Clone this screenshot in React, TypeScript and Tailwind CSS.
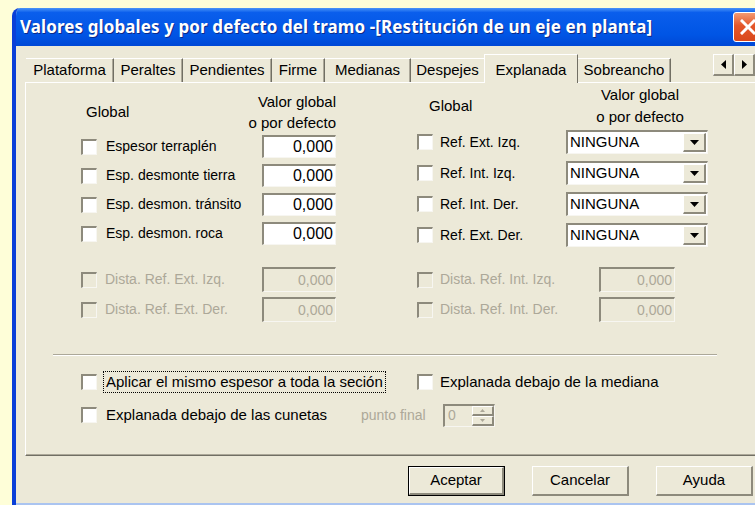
import React from 'react';

// Windows XP style dialog: global / default values of a road section
const sans = "font-['Liberation_Sans',Arial,sans-serif]";

// 3D edges used by the classic controls
const sunken =
  'border-t-2 border-l-2 border-r border-b border-t-[#8d8a7c] border-l-[#8d8a7c] border-r-[#f7f6f1] border-b-[#f7f6f1]';
const raised =
  'border-t border-l border-r-2 border-b-2 border-t-white border-l-white border-r-[#8d8a7c] border-b-[#8d8a7c]';

function Check({ disabled = false }: { disabled?: boolean }) {
  return <span className={`block w-[16px] h-[16px] shrink-0 ${sunken} ${disabled ? 'bg-[#ece9d8]' : 'bg-white'}`} />;
}

function NumberBox({ disabled = false, size }: { disabled?: boolean; size: string }) {
  return (
    <div
      className={`${size} ${sunken} flex items-center justify-end pr-[2px] ${
        disabled ? 'bg-[#ece9d8] text-[#aca899] text-[14px]' : 'bg-white text-black text-[16px]'
      }`}
    >
      0,000
    </div>
  );
}

function Combo() {
  return (
    <div className={`w-[142px] h-[24px] ${sunken} bg-white flex items-start`}>
      <span className="pl-[2px] pt-[1px] text-[15px] leading-[18px]">NINGUNA</span>
      <span className={`ml-auto mt-[1px] mr-[1px] w-[23px] h-[19px] ${raised} bg-[#ece9d8] flex items-center justify-center`}>
        <svg width="9" height="5" viewBox="0 0 9 5">
          <path d="M0 0h9L4.5 5z" fill="#000" />
        </svg>
      </span>
    </div>
  );
}

const tabs = [
  { label: 'Plataforma', w: 'w-[88px]' },
  { label: 'Peraltes', w: 'w-[69px]' },
  { label: 'Pendientes', w: 'w-[89px]' },
  { label: 'Firme', w: 'w-[53px]' },
  { label: 'Medianas', w: 'w-[86px]' },
];

const leftRows = ['Espesor terraplén', 'Esp. desmonte tierra', 'Esp. desmon. tránsito', 'Esp. desmon. roca'];
const rightRows = ['Ref. Ext. Izq.', 'Ref. Int. Izq.', 'Ref. Int. Der.', 'Ref. Ext. Der.'];

function Tab({ label, w, edge = true }: { label: string; w: string; edge?: boolean }) {
  return (
    <div
      className={`${w} h-[24px] flex items-center justify-center border-t border-t-white ${
        edge ? 'border-r border-r-[#716f64] shadow-[inset_-1px_0_0_#aca899]' : ''
      }`}
    >
      {label}
    </div>
  );
}

function ScrollArrow({ dir }: { dir: 'left' | 'right' }) {
  return (
    <span className={`w-[21px] h-[22px] ${raised} bg-[#ece9d8] flex items-center justify-center`}>
      <svg width="5" height="9" viewBox="0 0 5 9">
        <path d={dir === 'left' ? 'M5 0v9L0 4.5z' : 'M0 0v9l5-4.5z'} fill="#000" />
      </svg>
    </span>
  );
}

function Button({ label, primary = false }: { label: string; primary?: boolean }) {
  return (
    <div className={`w-[97px] h-[30px] ${primary ? 'border border-black' : ''}`}>
      <div className={`w-full h-full ${raised} bg-[#ece9d8] flex items-center justify-center text-[15px]`}>{label}</div>
    </div>
  );
}

export default function App() {
  return (
    <div className={`w-[755px] h-[505px] overflow-hidden bg-[#fefed8] pl-[12px] pt-[8px] ${sans} text-black`}>
      <div className="w-[760px] flex flex-col rounded-tl-[8px] overflow-hidden border-l-4 border-l-[#0a3fd8]">
        {/* title bar */}
        <div className="h-[38px] flex items-center pl-[4px] bg-[linear-gradient(to_bottom,#4a94f8,#0a5eec_12%,#0055e5_70%,#0048d6)]">
          <span className="font-['Noto_Sans',sans-serif] font-bold text-[17px] tracking-[0.1px] text-white [text-shadow:1px_1px_0_#0b2a8a]">
            Valores globales y por defecto del tramo -[Restitución de un eje en planta]
          </span>
          <span className="ml-auto mr-[9px] w-[30px] h-[30px] rounded-[3px] border border-white bg-[linear-gradient(to_bottom,#f39a72,#e4572a_45%,#d9481c)] flex items-center justify-center">
            <svg width="16" height="16" viewBox="0 0 16 16">
              <path d="M2 2l12 12M14 2L2 14" stroke="#fff" strokeWidth="3" strokeLinecap="square" />
            </svg>
          </span>
        </div>

        {/* dialog body */}
        <div className="h-[457px] bg-[#ece9d8] pt-[8px] text-[15px] flex flex-col">
          {/* tab strip */}
          <div className="h-[28px] ml-[10px] flex items-end">
            {tabs.map((t) => (
              <Tab key={t.label} label={t.label} w={t.w} />
            ))}
            <Tab label="Despejes" w="w-[73px]" edge={false} />
            <div className="w-[94px] h-[29px] -mb-px relative z-10 bg-[#ece9d8] border-t border-l border-white border-r border-r-[#716f64] flex justify-center pt-[4px]">
              Explanada
            </div>
            <Tab label="Sobreancho" w="w-[93px]" />
            <div className="self-start ml-[42px] flex">
              <ScrollArrow dir="left" />
              <ScrollArrow dir="right" />
            </div>
          </div>

          {/* tab page */}
          <div className="ml-[9px] w-[745px] h-[374px] border-t border-l border-white border-b border-b-[#716f64] shadow-[inset_0_-1px_0_#aca899] flex flex-col">
            {/* enabled values */}
            <div className="flex pl-[55px] items-start">
              <div className="w-[255px] mt-[8px] flex flex-col">
                <div className="h-[42px] flex items-center">
                  <span className="pl-[5px]">Global</span>
                  <span className="ml-auto text-right leading-[21px]">
                    Valor global
                    <br />o por defecto
                  </span>
                </div>
                <div className="mt-[2px] flex flex-col gap-[6px]">
                  {leftRows.map((r) => (
                    <div key={r} className="h-[23px] flex items-center">
                      <Check />
                      <span className="ml-[9px] text-[14px]">{r}</span>
                      <div className="ml-auto">
                        <NumberBox size="w-[74px] h-[23px]" />
                      </div>
                    </div>
                  ))}
                </div>
              </div>

              <div className="w-[297px] ml-[81px] mt-[1px] flex flex-col">
                <div className="h-[44px] flex items-center">
                  <span className="w-[149px] pl-[12px]">Global</span>
                  <span className="w-[148px] text-center leading-[22px]">
                    Valor global
                    <br />o por defecto
                  </span>
                </div>
                <div className="mt-[2px] flex flex-col gap-[7px]">
                  {rightRows.map((r) => (
                    <div key={r} className="h-[24px] flex items-center">
                      <Check />
                      <span className="ml-[7px] text-[14px]">{r}</span>
                      <div className="ml-auto mr-[6px]">
                        <Combo />
                      </div>
                    </div>
                  ))}
                </div>
              </div>
            </div>

            {/* disabled distances */}
            <div className="mt-[20px] flex pl-[55px] text-[14px] text-[#aca899]">
              <div className="w-[255px] flex flex-col gap-[5px]">
                {['Dista. Ref. Ext. Izq.', 'Dista. Ref. Ext. Der.'].map((r) => (
                  <div key={r} className="h-[25px] flex items-center">
                    <Check disabled />
                    <span className="ml-[8px]">{r}</span>
                    <div className="ml-auto">
                      <NumberBox disabled size="w-[74px] h-[25px]" />
                    </div>
                  </div>
                ))}
              </div>
              <div className="w-[258px] ml-[81px] flex flex-col gap-[5px]">
                {['Dista. Ref. Int. Izq.', 'Dista. Ref. Int. Der.'].map((r) => (
                  <div key={r} className="h-[25px] flex items-center">
                    <Check disabled />
                    <span className="ml-[7px]">{r}</span>
                    <div className="ml-auto">
                      <NumberBox disabled size="w-[76px] h-[25px]" />
                    </div>
                  </div>
                ))}
              </div>
            </div>

            <div className="mt-[32px] ml-[27px] w-[664px] border-t border-t-[#aca899] border-b border-b-white" />

            {/* options */}
            <div className="mt-[15px] pl-[55px] h-[22px] flex items-center">
              <div className="w-[336px] flex items-center">
                <Check />
                <span className="ml-[6px] px-[2px] leading-[20px] border border-dotted border-black">
                  Aplicar el mismo espesor a toda la seción
                </span>
              </div>
              <Check />
              <span className="ml-[7px]">Explanada debajo de la mediana</span>
            </div>
            <div className="mt-[10px] pl-[55px] h-[24px] flex items-center">
              <Check />
              <span className="ml-[9px] w-[255px]">Explanada debajo de las cunetas</span>
              <span className="w-[82px] text-[14px] text-[#aca899]">punto final</span>
              <div className={`w-[52px] h-[23px] ${sunken} bg-[#ece9d8] flex`}>
                <span className="pl-[3px] text-[14px] leading-[19px] text-[#aca899]">0</span>
                <div className="ml-auto w-[22px] flex flex-col">
                  <span className={`h-1/2 ${raised} bg-[#ece9d8] flex items-center justify-center`}>
                    <svg width="5" height="3" viewBox="0 0 5 3">
                      <path d="M2.5 0L5 3H0z" fill="#aca899" />
                    </svg>
                  </span>
                  <span className={`h-1/2 ${raised} bg-[#ece9d8] flex items-center justify-center`}>
                    <svg width="5" height="3" viewBox="0 0 5 3">
                      <path d="M0 0h5L2.5 3z" fill="#aca899" />
                    </svg>
                  </span>
                </div>
              </div>
            </div>
          </div>

          {/* dialog buttons */}
          <div className="mt-[10px] ml-[392px] flex gap-[27px]">
            <Button label="Aceptar" primary />
            <Button label="Cancelar" />
            <Button label="Ayuda" />
          </div>
        </div>
        <div className="h-[4px] bg-[#aac4f0]" />
      </div>
    </div>
  );
}
